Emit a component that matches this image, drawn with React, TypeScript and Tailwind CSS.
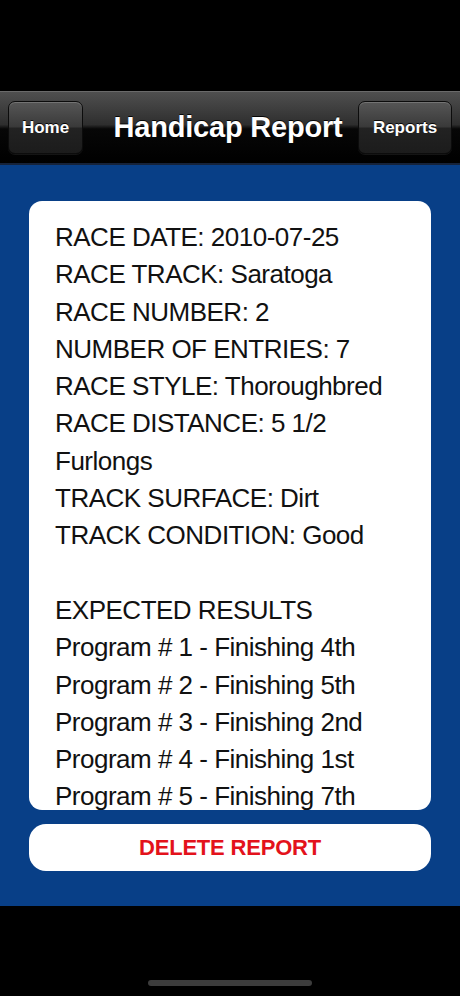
import React from 'react'

const details = [
  'RACE DATE: 2010-07-25',
  'RACE TRACK: Saratoga',
  'RACE NUMBER: 2',
  'NUMBER OF ENTRIES: 7',
  'RACE STYLE: Thoroughbred',
  'RACE DISTANCE: 5 1/2 Furlongs',
  'TRACK SURFACE: Dirt',
  'TRACK CONDITION: Good',
]

// only the rows visible before the card clips
const results = [
  'Program # 1 - Finishing 4th',
  'Program # 2 - Finishing 5th',
  'Program # 3 - Finishing 2nd',
  'Program # 4 - Finishing 1st',
  'Program # 5 - Finishing 7th',
]

function NavButton({ label, width }: { label: string; width: string }) {
  return (
    <button
      className={`${width} h-[53px] shrink-0 rounded-[7px] border border-[#0c0c0c] bg-[linear-gradient(to_bottom,#565656,#3a3a3a_48%,#222_52%,#1c1c1c)] shadow-[inset_0_1px_0_rgba(255,255,255,0.18),0_1px_0_rgba(255,255,255,0.08)] text-[17px] font-bold text-white [text-shadow:0_-1px_0_rgba(0,0,0,0.9)]`}
    >
      {label}
    </button>
  )
}

export default function App() {
  return (
    <div className="w-[460px] h-[996px] bg-black flex flex-col overflow-hidden font-['Liberation_Sans',Arial,sans-serif]">
      <div className="h-[91px] shrink-0" />

      <div className="h-[74px] shrink-0 flex items-center px-2 border-t border-[#6a6a6a] border-b-2 border-b-[#16233a] bg-[linear-gradient(to_bottom,#4f4f4f,#2e2e2e_46%,#070707_52%,#000)]">
        <NavButton label="Home" width="w-[75px]" />
        <h1 className="flex-1 pl-[15px] text-center text-[29px] font-bold text-white tracking-[-0.2px] [text-shadow:0_-1px_0_rgba(0,0,0,0.9)]">
          Handicap Report
        </h1>
        <NavButton label="Reports" width="w-[94px]" />
      </div>

      <div className="flex-1 bg-[#083f87] px-[29px] pt-[36px]">
        <div className="h-[609px] overflow-hidden rounded-[13px] bg-white pl-[26px] pr-[18px] pt-[18px] text-[26px] leading-[37.3px] tracking-[-0.5px] text-[#111]">
          {details.map((line) => (
            <p key={line}>{line}</p>
          ))}
          <p>&nbsp;</p>
          <p>EXPECTED RESULTS</p>
          {results.map((line) => (
            <p key={line}>{line}</p>
          ))}
        </div>

        <button className="mt-[14px] w-full h-[47px] rounded-[17px] bg-white text-[22px] font-bold text-[#e3121b] tracking-[-0.2px]">
          DELETE REPORT
        </button>
      </div>

      <div className="h-[90px] shrink-0 flex justify-center pt-[74px]">
        <div className="w-[164px] h-[6px] rounded-full bg-[#3c3c3c]" />
      </div>
    </div>
  )
}
